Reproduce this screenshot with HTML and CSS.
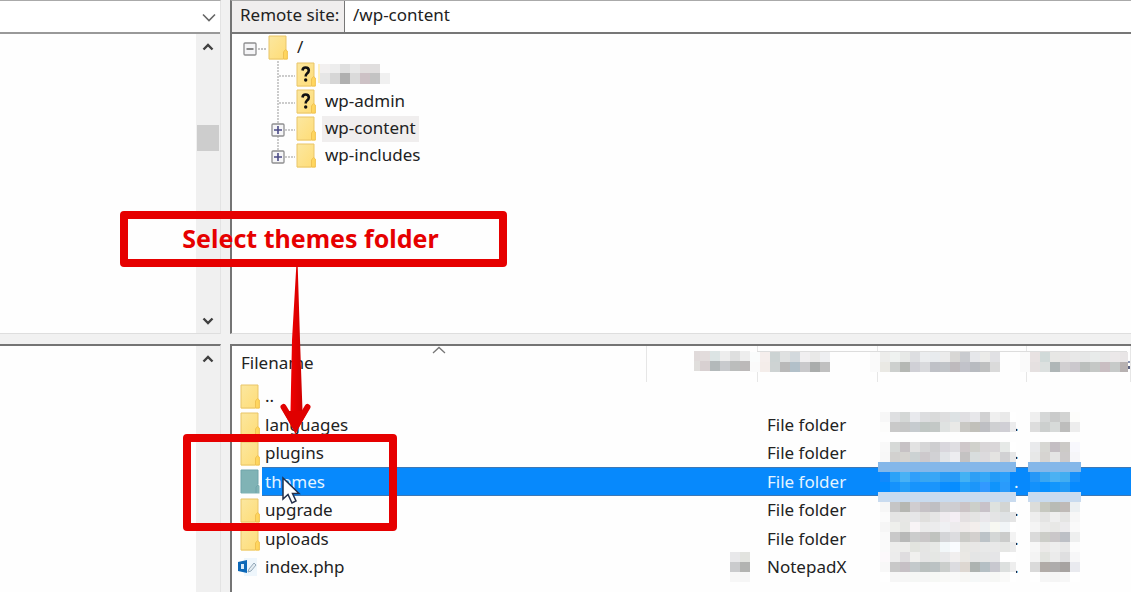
FILE: index.html
```html
<!DOCTYPE html>
<html lang="en">
<head>
<meta charset="utf-8">
<title>Remote site</title>
<link rel="stylesheet" href="styles.css">
</head>
<body>
<svg class="defs" aria-hidden="true">
  <defs>
    <linearGradient id="gold" x1="0" y1="0" x2="1" y2="1"><stop offset="0" stop-color="#fbe7a0"/><stop offset="1" stop-color="#ffdc74"/></linearGradient>
    <linearGradient id="shaft" x1="0" y1="0" x2="1" y2="0"><stop offset="0" stop-color="#f00000"/><stop offset="1" stop-color="#cf0000"/></linearGradient>
    <symbol id="folder" viewBox="0 0 20 25">
      <path d="M1 1H18V15L19.500 16V24.500H1Z" fill="url(#gold)"/>
      <path d="M1 24V1H18V15M1 24H15" fill="none" stroke="#e9c568"/>
      <path d="M15.500 24V17L17.500 14.500L19.300 16V24Z" fill="#ffd65e" stroke="#f0c252"/>
    </symbol>
    <symbol id="folder-selected" viewBox="0 0 20 25">
      <path d="M1 1H18V15L19.500 17V24.500H1Z" fill="#80b3b5"/>
      <path d="M1 24V1H18V15M16 24V18L18 16" fill="none" stroke="#6fa3aa"/>
    </symbol>
    <symbol id="question" viewBox="0 0 20 25">
      <path d="M6.500 8.500Q6.800 5.500 9.500 5.500Q12.800 5.500 12.800 8.600Q12.800 10.500 11 11.500Q9.700 12.400 9.700 14.500" stroke="#111" stroke-width="2.600" fill="none"/>
      <circle cx="9.700" cy="18" r="1.700" fill="#111"/>
    </symbol>
    <symbol id="chevron" viewBox="0 0 12 8"><path d="M1.500 6.500L6 2L10.500 6.500" fill="none" stroke="#404040" stroke-width="2.400"/></symbol>
    <symbol id="toggle" viewBox="0 0 14 14">
      <rect x="1" y="1" width="12" height="12" rx="1" fill="#f5f5f7" stroke="#8e8e90" stroke-width="1.300"/>
    </symbol>
  </defs>
</svg>
<main class="app">
  <section class="pane local-tree">
    <div class="combo">
      <select class="combo-select" aria-label="Local site"><option></option></select>
      <svg class="combo-arrow" viewBox="0 0 14 9"><path d="M1 1.500L7 7.500L13 1.500" fill="none" stroke="#666" stroke-width="1.600"/></svg>
    </div>
    <div class="scroll-area">
      <div class="scrollbar">
        <svg class="arrow"><use href="#chevron"/></svg>
        <span class="thumb"></span>
        <svg class="arrow down"><use href="#chevron"/></svg>
      </div>
    </div>
  </section>
  <section class="pane remote-tree">
    <div class="path-bar">
      <label class="path-label" for="remote-path">Remote site:</label>
      <input class="path-input" id="remote-path" type="text" value="/wp-content">
    </div>
    <ul class="tree">
      <li class="node">
        <svg class="branch root" viewBox="0 0 36 27"><use href="#toggle" x="11" y="8" width="14" height="14"/><path d="M14.500 15H21.500" stroke="#666" stroke-width="1.500"/><path d="M26 15H34" stroke="#888" stroke-dasharray="2 1"/></svg>
        <svg class="folder"><use href="#folder"/></svg><span class="node-name">/</span>
      </li>
      <li class="node">
        <svg class="branch" viewBox="0 0 64 27"><path d="M46 0V27M47 15H63" stroke="#999" fill="none" stroke-dasharray="2 1"/></svg>
        <svg class="folder"><use href="#folder"/><use href="#question"/></svg>
        <svg class="redacted-name" data-mosaic="node"></svg>
      </li>
      <li class="node">
        <svg class="branch" viewBox="0 0 64 27"><path d="M46 0V27M47 15H63" stroke="#999" fill="none" stroke-dasharray="2 1"/></svg>
        <svg class="folder"><use href="#folder"/><use href="#question"/></svg>
        <span class="node-name">wp-admin</span>
      </li>
      <li class="node">
        <svg class="branch" viewBox="0 0 64 27"><path d="M46 0V27M53 15H63" stroke="#999" fill="none" stroke-dasharray="2 1"/><use href="#toggle" x="39" y="8" width="14" height="14"/><path d="M42 15H50M46 11V19" stroke="#4b4b86" stroke-width="1.600"/></svg>
        <svg class="folder"><use href="#folder"/></svg><span class="node-name current">wp-content</span>
      </li>
      <li class="node">
        <svg class="branch" viewBox="0 0 64 27"><path d="M46 0V8M53 15H63" stroke="#999" fill="none" stroke-dasharray="2 1"/><use href="#toggle" x="39" y="8" width="14" height="14"/><path d="M42 15H50M46 11V19" stroke="#4b4b86" stroke-width="1.600"/></svg>
        <svg class="folder"><use href="#folder"/></svg><span class="node-name">wp-includes</span>
      </li>
    </ul>
  </section>
  <section class="pane local-list">
    <div class="scroll-area">
      <div class="scrollbar"><svg class="arrow"><use href="#chevron"/></svg></div>
    </div>
  </section>
  <section class="pane remote-list">
    <table class="files">
      <colgroup><col class="c-icon"><col class="c-name"><col class="c-size"><col class="c-type"><col class="c-date"><col class="c-perm"></colgroup>
      <thead><tr><th class="filename" colspan="2">Filename</th><th></th><th></th><th></th><th></th></tr></thead>
      <tbody>
        <tr><td><svg class="folder"><use href="#folder"/></svg></td><td>..</td><td></td><td></td><td></td><td></td></tr>
        <tr><td><svg class="folder"><use href="#folder"/></svg></td><td>languages</td><td></td><td>File folder</td><td class="date">.</td><td></td></tr>
        <tr><td><svg class="folder"><use href="#folder"/></svg></td><td>plugins</td><td></td><td>File folder</td><td class="date">.</td><td></td></tr>
        <tr class="selected"><td><svg class="folder"><use href="#folder-selected"/></svg></td><td>themes</td><td></td><td>File folder</td><td class="date">.</td><td></td></tr>
        <tr><td><svg class="folder"><use href="#folder"/></svg></td><td>upgrade</td><td></td><td>File folder</td><td class="date">.</td><td></td></tr>
        <tr><td><svg class="folder"><use href="#folder"/></svg></td><td>uploads</td><td></td><td>File folder</td><td class="date">.</td><td></td></tr>
        <tr><td><svg class="php" viewBox="0 0 20 18"><rect x="6" width="13" height="18" fill="#eef6fc"/><path d="M0 4L9 2V15L0 13Z" fill="#0c68b8"/><path d="M3 6H6V11H3Z" fill="#d8ebfa"/><path d="M10 14L11 11L16 5L18 7L13 13Z" fill="#e4ecf2" stroke="#93a8b8"/></svg></td><td>index.php</td><td></td><td>NotepadX</td><td class="date">.</td><td></td></tr>
      </tbody>
    </table>
    <svg class="sort" viewBox="0 0 14 8"><path d="M1 7L7 1.500L13 7" fill="none" stroke="#777" stroke-width="1.300"/></svg>
    <svg class="redaction" data-mosaic="list" viewBox="232 346 899 246"></svg>
  </section>
  <div class="callout">Select themes folder</div>
  <svg class="pointer-arrow" viewBox="0 0 32 170">
    <path d="M17.300 0H18.700L21 74L23.500 145H11.500L13 74Z" fill="url(#shaft)"/>
    <path d="M4.500 141L16.500 161L28.500 141" fill="none" stroke="#e00000" stroke-width="6" stroke-linecap="round" stroke-linejoin="round"/>
    <path d="M4 145L11.500 145H23.500L29 145L16.500 168Z" fill="#e00000"/>
  </svg>
  <svg class="cursor" viewBox="0 0 20 30"><path d="M2 2V23L7 18.500L11 27L15 25L11.500 17.500H18Z" fill="#fff" stroke="#25304a" stroke-width="1.500"/></svg>
  <div class="highlight"></div>
</main>
<script src="mosaic.js"></script>
</body>
</html>
```
FILE: styles.css
```css
* { box-sizing: border-box; }
body {
  margin: 0;
  font: 17px/24px "Noto Sans", "Open Sans", sans-serif;
  color: #222;
  background: #f1f1f1;
}
svg { display: block; flex: none; }
.defs { position: absolute; width: 0; height: 0; }
.app {
  position: relative;
  display: grid;
  grid-template-columns: 221px 1fr;
  grid-template-rows: 334fr 248fr;
  gap: 10px 9px;
  height: 100vh;
  overflow: hidden;
}
.pane {
  display: flex;
  flex-direction: column;
  min-width: 0;
  min-height: 0;
  background: #fefefe;
  position: relative;
}
.local-tree, .remote-tree { border-bottom: 1px solid #dedede; border-top: 1px solid #aaa; }
.local-tree, .local-list { border-right: 1px solid #e3e3e3; }
.remote-tree, .remote-list { border-left: 2px solid #747474; }
.local-list, .remote-list { border-top: 2px solid #747474; }
.combo { position: relative; display: flex; height: 33px; border-bottom: 2px solid #999; }
.combo-select { flex: 1; appearance: none; border: 0; background: #fff; font: inherit; }
.combo-arrow { position: absolute; right: 4px; top: 12px; width: 14px; height: 9px; pointer-events: none; }
.scroll-area { flex: 1; display: flex; justify-content: flex-end; }
.scrollbar {
  display: flex;
  flex-direction: column;
  align-items: center;
  width: 24px;
  padding: 9px 0 8px;
  background: #f0f0f0;
}
.arrow { width: 12px; height: 8px; }
.down { transform: rotate(180deg); margin-top: auto; }
.thumb { width: 22px; height: 26px; margin-top: 74px; background: #cdcdcd; }
.path-bar { display: flex; height: 33px; border-bottom: 2px solid #777; }
.path-label { width: 113px; padding: 2px 0 0 8px; background: #f0eeee; border-right: 1px solid #777; white-space: nowrap; }
.path-input { flex: 1; min-width: 0; border: 0; padding: 0 8px 4px; font: inherit; color: inherit; background: #fff; }
.tree { list-style: none; margin: 0; padding: 0; }
.node { display: flex; align-items: center; height: 27px; }
.branch { width: 64px; height: 27px; }
.root { width: 36px; }
.folder { width: 20px; height: 25px; }
.node-name { margin-left: 6px; padding: 0 3px 2px; line-height: 24px; }
.current { background: #f0eeee; }
.redacted-name { width: 72px; height: 22px; margin-left: 2px; }
.files { width: 100%; border-collapse: collapse; table-layout: fixed; }
.c-icon { width: 30px; }
.c-name { width: 384px; }
.c-size { width: 111px; }
.c-type { width: 120px; }
.c-date { width: 149px; }
.files th { height: 36px; padding: 0 0 2px; border-right: 1px solid #e6e6e6; font-weight: 400; text-align: left; }
.files .filename { padding-left: 9px; }
.files td { height: 28px; padding: 0 0 0 3px; white-space: nowrap; line-height: 24px; }
.files td:first-child { padding-left: 8px; }
.files td:nth-child(4) { padding-left: 10px; }
.files tr:nth-child(even) td { height: 29px; }
.files td.date { padding-left: 137px; }
.selected td:not(:first-child) { background: #0789fc; color: #e4f4ff; box-shadow: inset 0 1px #3d78b5, inset 0 -1px #3d78b5; }
.php { width: 20px; height: 18px; margin-left: -2px; }
.sort { position: absolute; left: 200px; top: 0; width: 14px; height: 8px; }
.redaction { position: absolute; left: 0; top: 0; width: 899px; height: 246px; }
.callout {
  position: absolute;
  left: 120px;
  top: 211px;
  width: 387px;
  padding: 5px 6px 7px 0;
  border: 8px solid #e60000;
  border-radius: 4px;
  text-align: center;
  color: #e60000;
  font-size: 25px;
  font-weight: 700;
  line-height: 28px;
}
.pointer-arrow { position: absolute; left: 279px; top: 266px; width: 32px; height: 170px; }
.cursor { position: absolute; left: 281px; top: 476px; width: 20px; height: 30px; }
.highlight {
  position: absolute;
  left: 183px;
  top: 434px;
  width: 214px;
  height: 97px;
  border: 8px solid #e60000;
  border-radius: 4px;
}
```
FILE: mosaic.js
```javascript
// Each block: x, y, width, row height, then rows of 10px cells.
const blocks = {
  node: [
    [0, 0, 2, 19, ["fff0c0"]],
    [2, 0, 60, 9, ["f2f0f0 ededed dfdfdf e8e8e8 e2dede e0dede"]],
    [2, 9, 70, 11, ["e6e6e6 d6d6d6 b0b0b0 dadada cdc1c5 c3c3c3 f0f0f0"]]
  ],
  list: [
    [757, 351, 370, 1, ["dddddd*37"]],
    [694, 351, 6, 10, ["e0dada", "e0dedc"]],
    [700, 351, 50, 10, ["e2dcdc dce4e4 ededed dedfdf ededed", "d8d0d1 b3b9ba c8cacd bbbdbc bcb9b9"]],
    [750, 352, 80, 10, ["fafcfc f5eeec ccd3d3 dfe1e1 d3d9dd f0eff0 e9e9e8 eeeff1", "fafafa f4edea ced3d3 b9b9b9 b2c0c9 c9c9cb aaadac c0c0c0"]],
    [870, 352, 130, 10, ["fafafa ededeb eff2f0 e7e9e7 dddee1 ebedef e8ebee ebebeb d8d7d5 c9cbcf e6e7ea ebebe9 e1e1e4", "fafafa eae9e4 cdd0ce b5b8b4 d0d0d6 d9dadd bfc1c7 c1c4c8 bebabd c1c2c9 b8bbc0 bfc0c0 dadada"]],
    [1020, 352, 108, 10, ["fafafa e8e2e2 d1dad9 e7e7e5 e7e5e5 e8e8e8 e6e7e7 e8ebea e8e8e8 ebe8e9 e8e5e6", "fafafa e5e0e0 dce0df afb6b7 d1cfd1 cbc8cd bbbfbd c5c8c6 c9bec2 c7cac9 b7b1b1"]],
    [1128, 361, 2, 2, ["8a93b0"]],
    [1128, 366, 2, 3, ["5c6280"]],
    [880, 412, 136, 10, [
      "f7f7f7 dedfe1 d4d7d6 e8e9ed dcdddf d9dada dededf dde2e4 e0dfe2 e7e7ea d1d1d2 efefef e9e9e9 ffffff",
      "fcfcfb c9c9c9 c6c7c7 c6cbcf c0c7c4 c3c8c6 dfe2e1 e9e9e7 c9c8c4 c1c0ba bebfc3 cfd0d2 d0cfd5 ececed"]],
    [880, 442, 136, 10, [
      "f9f9f9 d6d9d7 c7c2c5 e2e2e2 d6d6d7 ceced0 d9d7dd dfdee2 cfc8ca d0d1cc d9d6d8 d9d6d8 e6e9e7 ffffff",
      "f8f8f8 d2d1cf d5d3d0 ccd2d3 cdc9cc d1d1d4 e1e4e7 ededf0 c4c2c2 d8dddd dcdadd e4e3e1 d1d1d3 e7e7e7"]],
    [878, 462, 138, 10, ["84b7e9*14"]],
    [880, 472, 130, 10, [
      "1189fb 2ba2f8 48b1f5 309ffb 37a6f1 38a6f6 2b9cf5 299bf7 43b1f4 2e9ff5 35a7f7 249bf7 2a9ffb",
      "058bff 1592fc 259ef8 1794fc 1694ff 1b95fb 0a8dff 078dff 229efa 1c96fa 3299ff 1094fb 2a9bfb"]],
    [878, 492, 138, 10, ["c9dbef*14"]],
    [880, 502, 136, 10, [
      "f6f6f6 c5c5c6 b6b7b2 d0cdd0 c6c2c6 bfbfc3 cfcfd2 cecdd1 cbc4c6 cccfca c8c2c9 dee2df d3d5d3 ffffff",
      "fbfbfb e4e4e4 e7e7e5 e6e6e8 e0dfdd e5e5e5 efebef f4eef4 e4e0e1 e4e4e3 e9e7eb e4e4e5 dfe2e4 e5e5e5",
      "f6f6f6 eeefec e6e7e4 f8f4f6 ebebeb ececed eff0f3 edebed efebea f3eeec edf0f2 f7f8f2 f1f5f7 ffffff",
      "fafafa c9c9c9 b8b9b8 cbcccc cac7c8 c0c3bf d4d5d8 dcdcdf cbcbc7 d3d0ce bcc3c8 d4d7d6 cbcccb f3f3f3",
      "fafafa ededec ededeb e2e4df e5e5e4 e7e9e6 f2f7f9 fafcff e8e7e3 e8e7e6 e8e9e9 e8e8e8 e6e7e5 ebebeb",
      "fcf9fb ececec dfdddf f0f0ee e5e5e5 e5e7e4 e8e8e9 f1efef eae8e4 e4e5e5 e5e6e6 e5e5e7 ffffff ffffff",
      "f8f8f8 c8c8c8 c6c0c5 c3c9cb bac0bf bbc2c3 cbcecc dcdce0 ddd7d1 adb3b1 b5bfc4 c8c8cf dde0df eeeeee",
      "ffffff f6f6f6 f6f6f6 f5f7f5 f6f6f6 f6f8f5 f9f9f7 f9f9f9 f7f7f5 f5f8f8 f7f7f7 f6f7f5 fafaf9 ffffff"]],
    [1030, 412, 50, 10, ["efefef d5d7d7 cacbcb d2d3d2 fdfdfb", "dddddd cccfce d7dad9 bdbdbc ededed"]],
    [1030, 442, 50, 10, ["e9eaec d7d7d3 c4bec3 cccac7 f8f8fd", "e7e8e8 d6d4d1 e4e4e4 cdcaca f6f6f9"]],
    [1028, 462, 53, 10, ["84b7e9*6"]],
    [1030, 472, 50, 10, ["2697f7 39a6f1 4bb1f3 42adf1 1790fb", "1391fb 0790ff 1296fc 229af6 068aff"]],
    [1028, 492, 53, 10, ["c9dbef*6"]],
    [1030, 502, 50, 10, [
      "dcddda c6c8bf b8bbb5 bfbab7 ecf0f2", "eeeeee e4e4e3 efefef e5e5e4 f7f7f7",
      "f4f4f4 ebebea e8e8e6 ecebed fafafa", "dadada cccdc8 cac7c9 bdc0c6 eeefef",
      "f7f7f7 ebe9e8 eeeeee e8e8e8 fcfcfc", "f4f4f4 e2e3df ebebeb dfdfe0 f7f7f8",
      "dadada b1aba7 aeacac a7a3a1 e9eaef", "ffffff f6f6f6 f5f5f5 f7f7f7 ffffff"]],
    [730, 552, 20, 10, ["e8e8ea e2e3df", "cacbcd b2b3b1", "f7f7f7 f6f6f6"]]
  ]
};

for (const svg of document.querySelectorAll("[data-mosaic]")) {
  for (const [x, y, width, height, rows] of blocks[svg.dataset.mosaic]) {
    rows.forEach((row, r) => {
      const [first, count] = row.split("*");
      const cells = count ? Array(Number(count)).fill(first) : row.split(" ");
      cells.forEach((color, c) => {
        if (c * 10 >= width) return;
        const rect = document.createElementNS("http://www.w3.org/2000/svg", "rect");
        rect.setAttribute("x", x + c * 10);
        rect.setAttribute("y", y + r * height);
        rect.setAttribute("width", Math.min(10, width - c * 10));
        rect.setAttribute("height", height);
        rect.setAttribute("fill", "#" + color);
        rect.setAttribute("shape-rendering", "crispEdges");
        svg.append(rect);
      });
    });
  }
}
```
